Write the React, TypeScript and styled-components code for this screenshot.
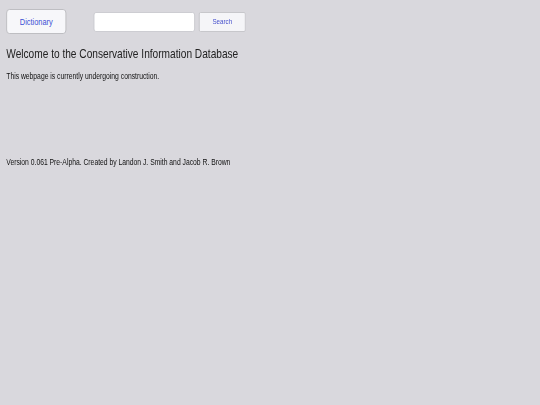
import styled, { createGlobalStyle } from 'styled-components';

// the whole page reads horizontally squeezed in the reference
const SQUEEZE = 0.78;

const GlobalStyle = createGlobalStyle`
    html, body {
        margin: 0;
        padding: 0;
        background-color: #d9d8dd;
        font-family: 'Liberation Sans', Arial, sans-serif;
    }
`;

const App = () => {
    return (
        <>
            <GlobalStyle />
            <Page>
                <Toolbar>
                    <NavButton>Dictionary</NavButton>
                    <SearchBox type="text" />
                    <SearchButton>Search</SearchButton>
                </Toolbar>
                <Title>Welcome to the Conservative Information Database</Title>
                <Note>This webpage is currently undergoing construction.</Note>
                <Footer>
                    Version 0.061 Pre-Alpha. Created by Landon J. Smith and Jacob R. Brown
                </Footer>
            </Page>
        </>
    );
};

export default App;

const Page = styled.div`
    width: ${540 / SQUEEZE}px;
    box-sizing: border-box;
    padding: 9px 8px;
    transform: scaleX(${SQUEEZE});
    transform-origin: 0 0;
`;

const Toolbar = styled.div`
    display: flex;
    align-items: center;
`;

const NavButton = styled.button`
    width: 77px;
    height: 25px;
    border: 1px solid #b9b9be;
    border-radius: 4px;
    background-color: #f7f7fa;
    color: #3b4fd4;
    font-family: 'Liberation Sans', Arial, sans-serif;
    font-size: 9.5px;
    padding: 0;
    margin-right: 35px;
`;

const SearchBox = styled.input`
    width: 130px;
    height: 20px;
    box-sizing: border-box;
    border: 1px solid #c9c9ce;
    border-radius: 3px;
    background-color: white;
    margin: 0 5px 0 0;
`;

const SearchButton = styled.button`
    width: 60px;
    height: 20px;
    border: 1px solid #c3c3c8;
    border-radius: 2px;
    background-color: #f5f5f8;
    color: #4650cc;
    font-family: 'Liberation Sans', Arial, sans-serif;
    font-size: 8px;
    padding: 0;
`;

const Title = styled.h1`
    margin: 12px 0 0;
    font-size: 13px;
    line-height: 15px;
    font-weight: normal;
    color: #222;
`;

const Note = styled.p`
    margin: 10px 0 0;
    font-size: 8.7px;
    line-height: 10px;
    color: #111;
`;

const Footer = styled.p`
    margin: 76px 0 0;
    font-size: 8.7px;
    line-height: 10px;
    color: #111;
`;
